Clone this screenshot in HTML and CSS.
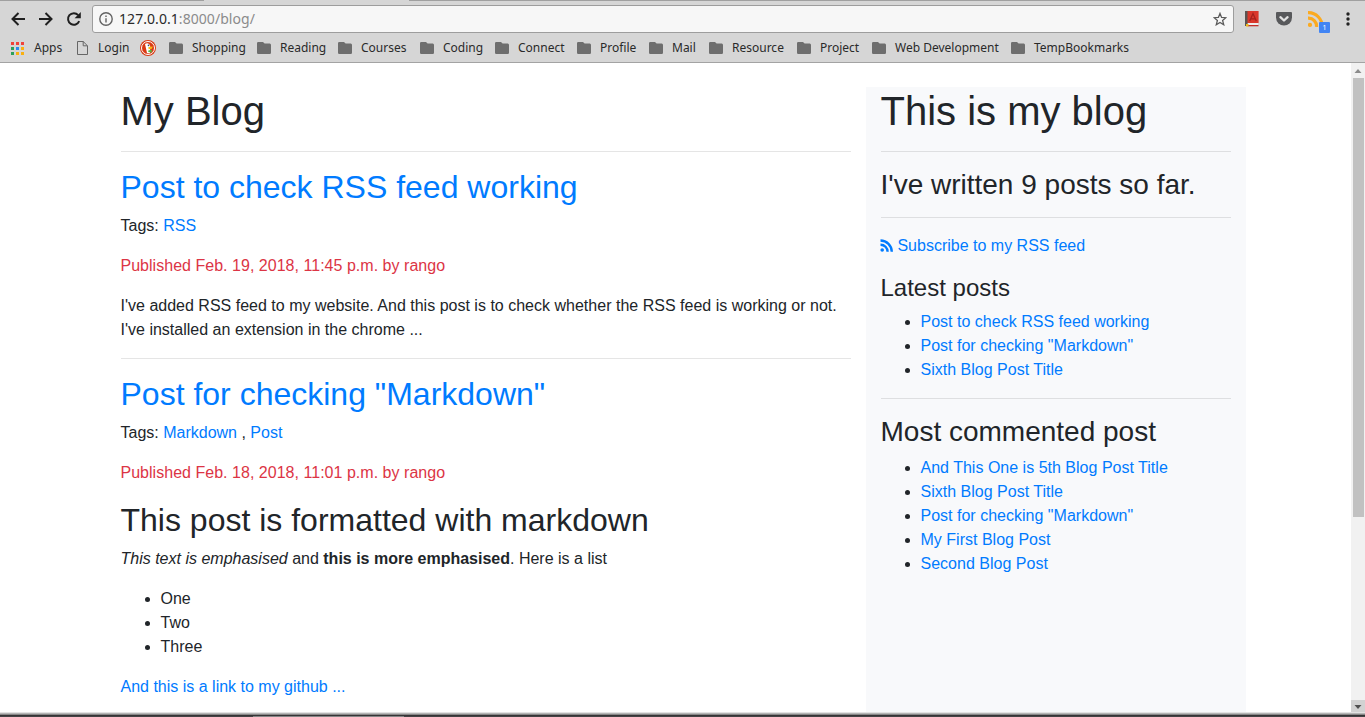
FILE: index.html
```html
<!DOCTYPE html>
<html lang="en">
<head>
<meta charset="utf-8">
<title>My Blog</title>
<link rel="stylesheet" href="styles.css">
</head>
<body>
<svg class="defs" width="0" height="0">
  <symbol id="folder" viewBox="0 0 14 12"><path fill="#6e6e6e" d="M1.2 0H6l1.6 1.6h5.2Q14 1.7 14 2.9v7.9Q14 12 12.8 12H1.2Q0 12 0 10.8V1.2Q0 0 1.2 0z"/></symbol>
</svg>
<div class="window">
  <header class="chrome">
    <div class="tab-edge"></div>
    <div class="toolbar">
      <svg class="nav" viewBox="0 0 16 16"><path d="M15 8H3M8.500 2L2.500 8l6 6"/></svg>
      <svg class="nav" viewBox="0 0 16 16"><path d="M1 8h12M7.500 2l6 6-6 6"/></svg>
      <svg class="nav" viewBox="0 0 16 16"><path d="M13.2 10.2A5.8 5.8 0 1 1 12.2 4.1"/><path class="solid" d="M14.8 1v6.2H8.6z"/></svg>
      <div class="address">
        <svg class="info" viewBox="0 0 14 14"><circle cx="7" cy="7" r="6.2"/><path d="M7 6.2v4.2M7 3.4v1.5"/></svg>
        <span class="host">127.0.0.1</span><span class="path">:8000/blog/</span>
        <svg class="star" viewBox="0 0 14 14"><path d="M7 1.400l1.600 4 4.300.3-3.300 2.800 1.100 4.200L7 10.400l-3.700 2.300 1.100-4.200L1.100 5.700l4.300-.3z"/></svg>
      </div>
      <div class="extensions">
        <svg class="book" viewBox="0 0 14 16"><path fill="#d9372b" d="M1 0h12.6v12H1z"/><path fill="#5b5451" d="M0 0h2.5v15H0z"/><path fill="#eee" d="M3 12h10v2H3z"/><path fill="#c22f29" d="M2.5 14h11v1.3h-11z"/><path fill="#efb61b" d="M1 13h2.5v2.5H1z"/><path fill="none" stroke="#a5211d" stroke-width="1.3" d="M4.7 10L8 2.5l3.3 7.5M5.6 7.8h4.8"/></svg>
        <svg class="pocket" viewBox="0 0 16 14"><path fill="#58595b" d="M1 0h14q1 0 1 1v4.500a8 8 0 0 1-16 0V1q0-1 1-1z"/><path fill="none" stroke="#e2e2e2" stroke-width="2.3" stroke-linecap="round" stroke-linejoin="round" d="M4.400 5.200L8 8.500l3.600-3.300"/></svg>
        <div class="feed">
          <svg viewBox="0 0 16 16"><path fill="none" stroke="#fbaa20" stroke-width="3.200" d="M0 1.700a13.500 13.500 0 0 1 14 14.300M0 7.200a8 8 0 0 1 8.500 8.800"/><circle cx="2" cy="13.900" r="2.100" fill="#fbaa20"/></svg>
          <span class="count">1</span>
        </div>
        <svg class="menu" viewBox="0 0 4 14"><circle cx="2" cy="2" r="1.700"/><circle cx="2" cy="7" r="1.700"/><circle cx="2" cy="12" r="1.700"/></svg>
      </div>
    </div>
    <nav class="bookmarks">
      <span class="bm apps"><svg viewBox="0 0 13 13"><path fill="#f0433a" d="M0 0h3v3H0zM5 0h3v3H5zM10 0h3v3h-3z"/><path fill="#2ca05a" d="M0 5h3v3H0zM0 10h3v3H0z"/><path fill="#2a8cf0" d="M5 5h3v3H5z"/><path fill="#f9b010" d="M10 5h3v3h-3zM5 10h3v3H5zM10 10h3v3h-3z"/></svg>Apps</span>
      <span class="bm login"><svg viewBox="0 0 11 14"><path fill="none" stroke="#666" d="M.5.5h5.700l4.300 4.300v8.700H.5zM6.200.5v4.300h4.300"/></svg>Login</span>
      <span class="bm duck"><svg viewBox="0 0 16 16"><circle cx="8" cy="8" r="8" fill="#d93a14"/><circle cx="8" cy="8" r="6.500" fill="none" stroke="#fff" stroke-width="1"/><path fill="#fff" d="M5 4q2.500-1.500 4.500.5 1 1.500.7 3l-.2 5.500q-1.700.6-3 0z"/><path fill="#f9bd15" d="M8.500 7l4.300-.4-1 2.200-3.300.5z"/><path fill="#4fb744" d="M8.300 10.500l3.400-.7v2.700L8.300 12z"/><circle cx="8.500" cy="5.400" r=".8" fill="#2d5074"/></svg></span>
      <span class="bm w88"><svg><use href="#folder"/></svg>Shopping</span>
      <span class="bm w81"><svg><use href="#folder"/></svg>Reading</span>
      <span class="bm w82"><svg><use href="#folder"/></svg>Courses</span>
      <span class="bm w75"><svg><use href="#folder"/></svg>Coding</span>
      <span class="bm w82"><svg><use href="#folder"/></svg>Connect</span>
      <span class="bm w72"><svg><use href="#folder"/></svg>Profile</span>
      <span class="bm w60"><svg><use href="#folder"/></svg>Mail</span>
      <span class="bm w88"><svg><use href="#folder"/></svg>Resource</span>
      <span class="bm w75"><svg><use href="#folder"/></svg>Project</span>
      <span class="bm w139"><svg><use href="#folder"/></svg>Web Development</span>
      <span class="bm"><svg><use href="#folder"/></svg>TempBookmarks</span>
    </nav>
  </header>
  <div class="viewport">
    <div class="page">
      <div class="row">
        <main class="posts">
          <h1>My Blog</h1>
          <hr>
          <h2><a>Post to check RSS feed working</a></h2>
          <p>Tags: <a>RSS</a></p>
          <p class="date">Published Feb. 19, 2018, 11:45 p.m. by rango</p>
          <p class="excerpt">I've added RSS feed to my website. And this post is to check whether the RSS feed is working or not. I've installed an extension in the chrome ...</p>
          <hr>
          <h2><a>Post for checking "Markdown"</a></h2>
          <p>Tags: <a>Markdown</a> , <a>Post</a></p>
          <p class="date">Published Feb. 18, 2018, 11:01 p.m. by rango</p>
          <h2>This post is formatted with markdown</h2>
          <p><em>This text is emphasised</em> and <strong>this is more emphasised</strong>. Here is a list</p>
          <ul><li>One</li><li>Two</li><li>Three</li></ul>
          <p><a>And this is a link to my github ...</a></p>
        </main>
        <aside class="sidebar">
          <h1>This is my blog</h1>
          <hr>
          <h3>I've written 9 posts so far.</h3>
          <hr>
          <p><a><svg class="rss" viewBox="0 0 13 13"><circle cx="2.200" cy="11" r="1.800"/><path d="M.5 1.500a11.300 11.300 0 0 1 11.300 11.300M.5 5.700a7 7 0 0 1 7.100 7.100"/></svg> Subscribe to my RSS feed</a></p>
          <h4>Latest posts</h4>
          <ul class="links"><li><a>Post to check RSS feed working</a></li><li><a>Post for checking "Markdown"</a></li><li><a>Sixth Blog Post Title</a></li></ul>
          <hr>
          <h3>Most commented post</h3>
          <ul class="links"><li><a>And This One is 5th Blog Post Title</a></li><li><a>Sixth Blog Post Title</a></li><li><a>Post for checking "Markdown"</a></li><li><a>My First Blog Post</a></li><li><a>Second Blog Post</a></li></ul>
        </aside>
      </div>
    </div>
    <div class="scrollbar">
      <svg class="arrow" viewBox="0 0 14 14"><path fill="#8b8b8b" d="M3.500 9L7 5l3.500 4z"/></svg>
      <div class="thumb"></div>
      <svg class="arrow down" viewBox="0 0 14 12"><path fill="#505050" d="M3.500 5L7 9l3.500-4z"/></svg>
    </div>
  </div>
  <footer class="panel-edge"><div class="active-task"></div></footer>
</div>
</body>
</html>
```

FILE: styles.css
```css
* { box-sizing: border-box; }
body { margin: 0; overflow: hidden; background: #fff; color: #212529; font: 16px/1.5 "Liberation Sans", Arial, sans-serif; }
.defs { position: absolute; }
.window { display: flex; flex-direction: column; width: 1365px; height: 717px; }

.chrome { height: 63px; flex: none; background: #d6d6d6; border-bottom: 1px solid #a3a3a3; font-family: "Noto Sans", sans-serif; }
.tab-edge { height: 1px; background: linear-gradient(90deg, #a0a0a0 204px, #d6d6d6 204px, #d6d6d6 409px, #a0a0a0 409px); }
.toolbar { display: flex; align-items: center; height: 36px; padding: 0 0 0 10px; }
.nav { width: 16px; height: 16px; margin-right: 12px; fill: none; stroke: #1f1f1f; stroke-width: 2; }
.nav .solid { fill: #1f1f1f; stroke: none; }
.address { display: flex; align-items: center; width: 1142px; height: 28px; margin-left: -2px; padding: 0 6px; background: #f7f7f7; border: 1px solid #9d9d9d; border-radius: 3px; font-size: 14px; line-height: 20px; }
.info { width: 14px; height: 14px; margin-right: 6px; fill: none; stroke: #636363; stroke-width: 1.4; }
.host { color: #2a2a2a; letter-spacing: .06px; }
.path { color: #8b8b8b; letter-spacing: .06px; }
.star { width: 14px; height: 14px; margin-left: auto; fill: none; stroke: #5a5a5a; stroke-width: 1.3; }
.extensions { display: flex; align-items: center; padding-left: 11px; }
.book { width: 14px; height: 16px; }
.pocket { width: 16px; height: 14px; margin-left: 17px; }
.feed { position: relative; width: 22px; height: 16px; margin-left: 16px; }
.feed svg { display: block; width: 16px; height: 16px; }
.count { position: absolute; left: 11px; top: 11px; width: 11px; height: 11px; background: #4285f4; border-radius: 1px; color: #fff; font-size: 7px; line-height: 11px; text-align: center; }
.menu { width: 4px; height: 14px; margin-left: 16px; fill: #222; }

.bookmarks { display: flex; height: 22px; padding-left: 11px; font-size: 12px; line-height: 22px; color: #2a2a2a; white-space: nowrap; }
.bm { display: flex; align-items: center; gap: 9px; flex: none; }
.bm svg { width: 14px; height: 12px; flex: none; }
.apps { width: 66px; gap: 10px; }
.apps svg { width: 13px; height: 13px; }
.login { width: 63px; gap: 10px; }
.login svg { width: 11px; height: 14px; }
.duck { width: 29px; }
.duck svg { width: 16px; height: 16px; }
.w60 { width: 60px; }
.w72 { width: 72px; }
.w75 { width: 75px; }
.w81 { width: 81px; }
.w82 { width: 82px; }
.w88 { width: 88px; }
.w139 { width: 139px; }

.viewport { display: flex; flex: 1; min-height: 0; }
.page { width: 1351px; padding-top: 24px; overflow: hidden; }
.row { display: flex; width: 1140px; height: 640px; margin: 0 auto; }
.posts { width: 760px; padding: 0 15px; }
.sidebar { width: 380px; padding: 0 15px; background: #f8f9fb; }
h1, h2, h3, h4 { margin: 0 0 8px; font-weight: 400; }
h1 { font-size: 40px; line-height: 48px; }
h2 { font-size: 32px; line-height: 38px; }
h3 { font-size: 28px; line-height: 33px; }
h4 { font-size: 24px; line-height: 28px; }
hr { margin: 16px 0; border: 0; border-top: 1px solid rgba(0, 0, 0, .1); }
p { margin: 0 0 16px; }
ul { margin: 0 0 16px; padding-left: 40px; }
a { color: #007bff; }
.date { color: #dc3545; letter-spacing: .025px; }
.excerpt { letter-spacing: .008px; }
.links { letter-spacing: .01px; }
.rss { width: 13px; height: 13px; margin: 0 0 0 -.5px; vertical-align: -1px; fill: #007bff; }
.rss path { fill: none; stroke: #007bff; stroke-width: 2.4; }

.scrollbar { display: flex; flex-direction: column; width: 14px; background: #f1f1f1; }
.arrow { width: 14px; height: 14px; margin-top: 1px; flex: none; }
.thumb { width: 11px; height: 439px; margin: 0 0 0 2px; background: #c1c1c1; }
.arrow.down { height: 12px; margin-top: auto; background: #d2d2d2; }

.panel-edge { height: 5px; flex: none; background: linear-gradient(#e2e2e2 1px, #b5b5b5 1px, #b5b5b5 2px, #888 2px, #888 3px, #363436 3px, #363436 4px, #454345 4px); padding: 4px 0 0 253px; }
.active-task { width: 151px; height: 1px; background: #858585; }
```
